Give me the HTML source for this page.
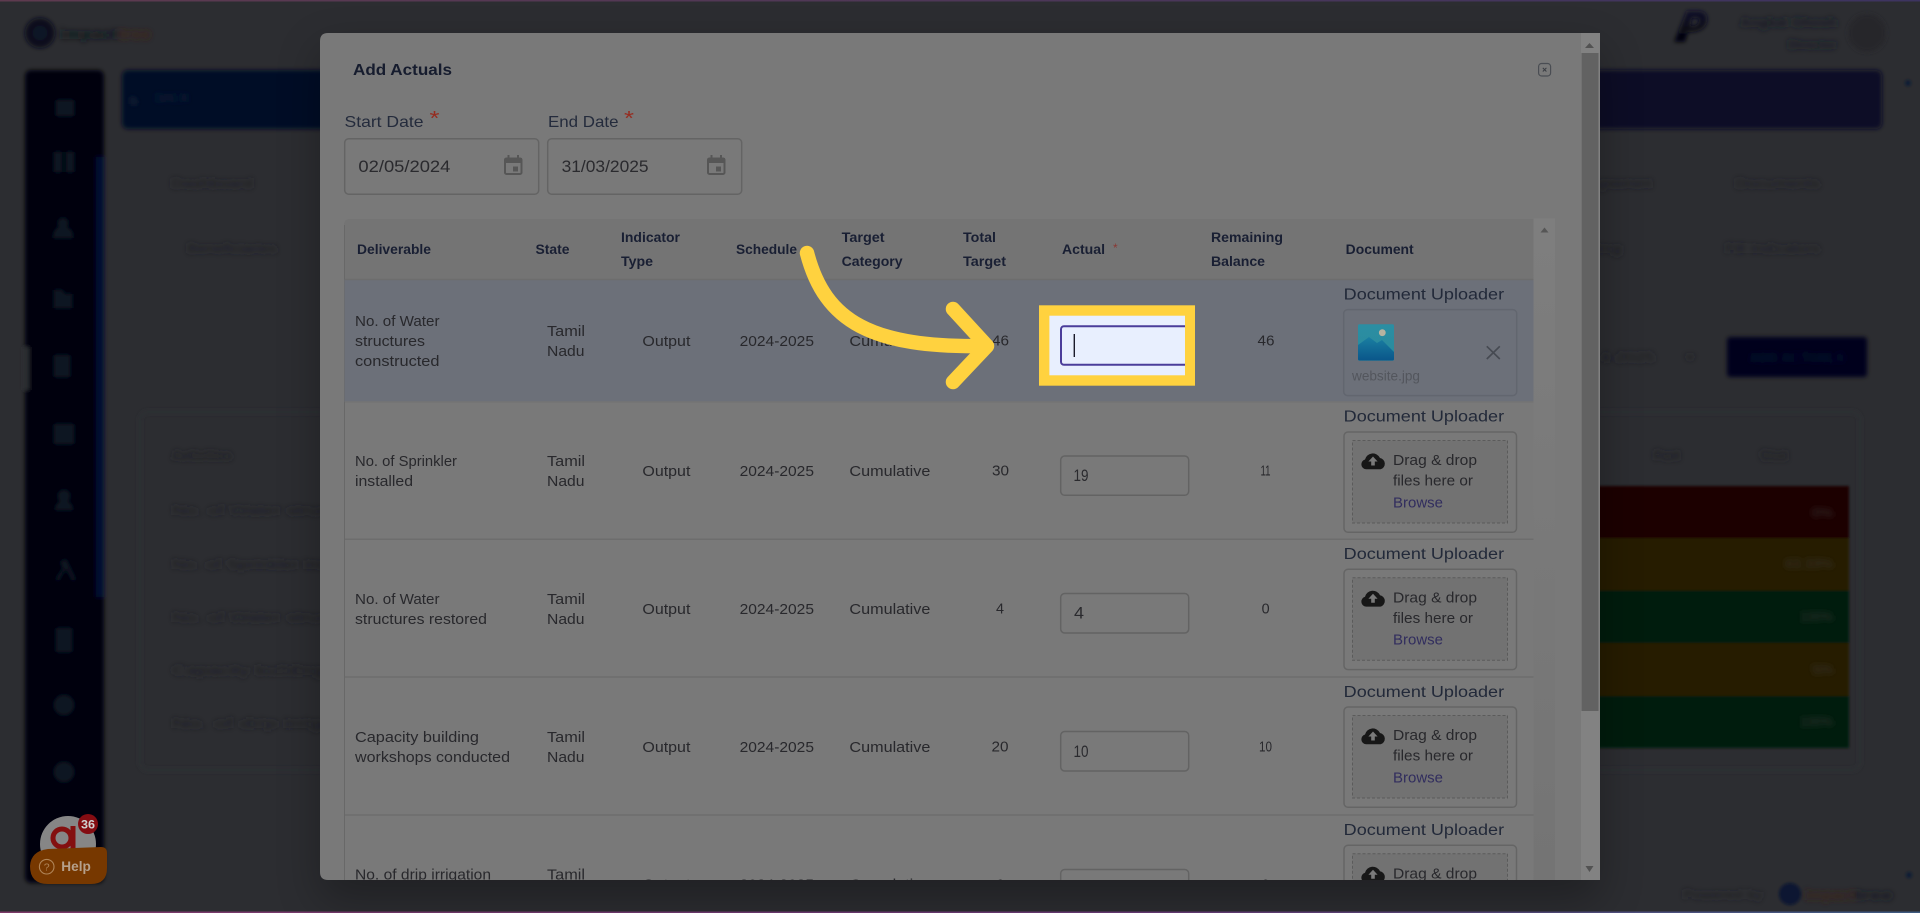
<!DOCTYPE html>
<html><head><meta charset="utf-8"><title>Add Actuals</title>
<style>
html,body{margin:0;padding:0;width:1920px;height:913px;overflow:hidden;background:#2c2d31}
svg{display:block;font-family:"Liberation Sans",sans-serif}
.c{font-size:14.5px;fill:#28282c}
.h{font-size:13.5px;font-weight:700;fill:#191f33}
.u{font-size:15.5px;fill:#222939}
.d{font-size:14.5px;fill:#28282c}
.b{font-size:14.5px;fill:#312d5e}
.l{font-size:16px;fill:#242b3c}
.v{font-size:16.5px;fill:#2a2a2e}
.bg{font-size:14px;fill:#212226}
</style></head><body>
<svg width="1920" height="913" viewBox="0 0 1920 913" xmlns="http://www.w3.org/2000/svg">
<defs>
<filter id="b2" filterUnits="userSpaceOnUse" x="0" y="0" width="1920" height="913"><feGaussianBlur stdDeviation="2"/></filter>
<filter id="bt" filterUnits="userSpaceOnUse" x="0" y="0" width="1920" height="913"><feGaussianBlur stdDeviation="2.8"/></filter>
<filter id="b1" filterUnits="userSpaceOnUse" x="0" y="0" width="1920" height="913"><feGaussianBlur stdDeviation="1.2"/></filter>
<filter id="b3" filterUnits="userSpaceOnUse" x="0" y="0" width="1920" height="913"><feGaussianBlur stdDeviation="22"/></filter>
<linearGradient id="ban" x1="0" x2="1" y1="0" y2="0"><stop offset="0" stop-color="#020f26"/><stop offset="1" stop-color="#090926"/></linearGradient>
<linearGradient id="pp" x1="0" x2="0" y1="0" y2="1"><stop offset="0" stop-color="#12112a"/><stop offset="1" stop-color="#02030a"/></linearGradient>
<linearGradient id="topl" x1="0" x2="1" y1="0" y2="0"><stop offset="0" stop-color="#5e3a4f"/><stop offset="1" stop-color="#3d3460"/></linearGradient>
<linearGradient id="botl" x1="0" x2="1" y1="0" y2="0"><stop offset="0" stop-color="#7c3a68"/><stop offset=".6" stop-color="#6a3c78"/><stop offset="1" stop-color="#3e5a80"/></linearGradient>
<linearGradient id="img" x1="0" x2="0" y1="0" y2="1"><stop offset="0" stop-color="#2b8ea3"/><stop offset="1" stop-color="#2a8a9c"/></linearGradient>
<linearGradient id="mt" x1="0" x2="0" y1="0" y2="1"><stop offset="0" stop-color="#1a7fa2"/><stop offset="1" stop-color="#0a568a"/></linearGradient>
<linearGradient id="trk" x1="0" x2="0" y1="0" y2="1"><stop offset="0" stop-color="#7e7e7e"/><stop offset="1" stop-color="#747474"/></linearGradient>
<clipPath id="mc"><path d="M328 33H1600V880H328Q320 880 320 872V41Q320 33 328 33Z"/></clipPath>
<clipPath id="ic"><rect x="1049" y="315" width="136" height="61"/></clipPath>
<g id="dz">
<rect x="1344" y="432" width="172.5" height="100.3" rx="4" fill="none" stroke="#656565" stroke-width="1.5"/>
<rect x="1352.5" y="440.5" width="155" height="82.5" fill="#727272" stroke="#5b5b5b" stroke-width="1" stroke-dasharray="3 2"/>
<path d="M1366 469.3a5 5 0 0 1-1-9.8a8 8 0 0 1 15-1.5a5.8 5.8 0 0 1 .6 11.3Z" fill="#171717"/>
<path d="M1373 456.5l4.6 5h-2.800v4h-3.600v-4h-2.800Z" fill="#7a7a7a"/>
</g>
<g id="cal" fill="none" stroke="#565656">
<rect x="505" y="158.5" width="16.5" height="15.5" rx="1.5" stroke-width="2"/>
<rect x="505" y="158.5" width="16.5" height="4" fill="#565656" stroke-width="1"/>
<path d="M508.5 155v4M518 155v4" stroke-width="2"/>
<rect x="513" y="166.5" width="5" height="5" fill="#565656" stroke="none"/>
</g>
</defs>

<rect width="1920" height="913" fill="#2c2d31"/>

<!-- blurred page behind overlay -->
<g filter="url(#b2)">
<circle cx="40" cy="33" r="15" fill="#08111f"/>
<circle cx="40" cy="33" r="7" fill="#0f1726"/>
<rect x="25" y="70" width="79" height="813" rx="6" fill="#00040e"/>
<rect x="96" y="157" width="8" height="440" fill="#000e30"/>
<rect x="24" y="347" width="5" height="43" fill="#2c2d31"/>
<g fill="#0f1522">
<rect x="56" y="100" width="18" height="16" rx="2"/>
<rect x="54" y="152" width="8" height="20" rx="1"/><rect x="66" y="152" width="8" height="20" rx="1"/>
<path d="M53 238q1-10 7-11a5 5 0 1 1 6 0q7 2 7 11Z"/>
<path d="M54 290h8l3 4h7v14h-18Z"/>
<rect x="54" y="355" width="16" height="22" rx="2"/>
<rect x="54" y="424" width="20" height="20" rx="2"/>
<circle cx="64" cy="496" r="6"/><path d="M55 510q1-9 9-9t9 9Z"/>
<path d="M55 580l8-12-3-6 6-3 10 21h-4l-6-12-7 12Z"/>
<rect x="56" y="628" width="16" height="24" rx="2"/>
<circle cx="64" cy="705" r="10"/>
<circle cx="64" cy="772" r="10"/>
</g>
<rect x="122" y="70" width="1760" height="59" rx="6" fill="url(#ban)"/>
<rect x="1727" y="337" width="140" height="40" rx="3" fill="#04051f"/>
<circle cx="1867" cy="33" r="19" fill="#27272a"/>
<path fill-rule="evenodd" d="M1687 11h12q9 1 8 10t-14 11h-5l-3 10h-11ZM1692 18h5q3 1 2 4t-5 4h-4Z" fill="url(#pp)"/>
<rect x="140" y="412" width="1720" height="358" rx="8" fill="none" stroke="#2f3035" stroke-width="2"/>
</g>
<g filter="url(#bt)">
<text x="60" y="39" textLength="58" lengthAdjust="spacingAndGlyphs" font-size="15" font-weight="700" fill="#10131c">impact</text>
<text x="119" y="39" textLength="32" lengthAdjust="spacingAndGlyphs" font-size="15" font-weight="700" fill="#3e2418">tree</text>
<text x="155" y="102" textLength="35" lengthAdjust="spacingAndGlyphs" font-size="12" fill="#162038">BACK</text>
<path d="M131 96l6 5v3h-6Z" fill="#1e2638"/>
<text class="bg" x="171" y="188" textLength="82" lengthAdjust="spacingAndGlyphs">Dashboard</text>
<text class="bg" x="187" y="253" textLength="90" lengthAdjust="spacingAndGlyphs">Beneficiaries</text>
<text class="bg" x="1590" y="188" textLength="62" lengthAdjust="spacingAndGlyphs">Agreement</text>
<text class="bg" x="1735" y="188" textLength="85" lengthAdjust="spacingAndGlyphs">Documents</text>
<text class="bg" x="1590" y="253" textLength="32" lengthAdjust="spacingAndGlyphs">ting</text>
<text class="bg" x="1725" y="253" textLength="95" lengthAdjust="spacingAndGlyphs">Fill Indicators</text>
<text class="bg" x="1600" y="362" textLength="55" lengthAdjust="spacingAndGlyphs">4-2025</text>
<path d="M1686 355l4 4 4-4" stroke="#212226" stroke-width="2" fill="none"/>
<text x="1749" y="362" textLength="96" lengthAdjust="spacingAndGlyphs" font-size="13" font-weight="700" fill="#10132e">ADD ACTUALS</text>
<text x="1740" y="27" textLength="97" lengthAdjust="spacingAndGlyphs" font-size="14" font-weight="700" fill="#171a25">Angkal Ghosh</text>
<text x="1788" y="49" textLength="49" lengthAdjust="spacingAndGlyphs" font-size="13" font-weight="700" fill="#171a25">Director</text>
<text class="bg" x="172" y="460" textLength="60" lengthAdjust="spacingAndGlyphs" font-weight="700">Activities</text>
<text class="bg" x="172" y="515" textLength="200" lengthAdjust="spacingAndGlyphs">No. of Water structures</text>
<text class="bg" x="172" y="569" textLength="200" lengthAdjust="spacingAndGlyphs">No. of Sprinkler installed</text>
<text class="bg" x="172" y="622" textLength="200" lengthAdjust="spacingAndGlyphs">No. of Water structures</text>
<text class="bg" x="172" y="675" textLength="200" lengthAdjust="spacingAndGlyphs">Capacity building work</text>
<text class="bg" x="172" y="728" textLength="200" lengthAdjust="spacingAndGlyphs">No. of drip irrigation</text>
<text class="bg" x="1654" y="460" textLength="26" lengthAdjust="spacingAndGlyphs" font-weight="700">Fact</text>
<text class="bg" x="1760" y="460" textLength="28" lengthAdjust="spacingAndGlyphs" font-weight="700">Stat</text>
</g>
<g filter="url(#b1)">
<rect x="1590" y="486" width="259" height="52" fill="#1f0204"/>
<rect x="1590" y="538" width="259" height="52.5" fill="#281d06"/>
<rect x="1590" y="590.5" width="259" height="52.5" fill="#031b0c"/>
<rect x="1590" y="643" width="259" height="53" fill="#281d06"/>
<rect x="1590" y="696" width="259" height="52" fill="#031b0c"/>
<circle cx="1908" cy="83" r="3" fill="#0b1a36"/>
<circle cx="1909" cy="875" r="3" fill="#0b1a36"/>
<circle cx="1790" cy="894" r="11" fill="#081530"/>
</g>
<g filter="url(#bt)">
<g font-size="13" fill="#383634">
<text x="1812" y="517" textLength="21" lengthAdjust="spacingAndGlyphs">0%</text>
<text x="1785" y="568" textLength="48" lengthAdjust="spacingAndGlyphs">63.33%</text>
<text x="1800" y="621" textLength="33" lengthAdjust="spacingAndGlyphs">100%</text>
<text x="1812" y="674" textLength="21" lengthAdjust="spacingAndGlyphs">50%</text>
<text x="1800" y="726" textLength="33" lengthAdjust="spacingAndGlyphs">100%</text>
</g>
<text x="1683" y="899" textLength="80" lengthAdjust="spacingAndGlyphs" font-size="13" fill="#212226">Powered by</text>
<text x="1805" y="900" textLength="50" lengthAdjust="spacingAndGlyphs" font-size="15" font-weight="700" fill="#3a2218">impact</text>
<text x="1855" y="900" textLength="38" lengthAdjust="spacingAndGlyphs" font-size="15" font-weight="700" fill="#181a22">tree</text>
</g>

<rect x="0" y="0" width="1920" height="1.5" fill="url(#topl)"/>
<rect x="0" y="911.5" width="1920" height="1.5" fill="url(#botl)"/>

<!-- Help widget -->
<circle cx="68" cy="844" r="28" fill="#868686"/>
<circle cx="62" cy="838" r="9" fill="none" stroke="#841010" stroke-width="5"/>
<path d="M73 826v24" stroke="#841010" stroke-width="5"/>
<circle cx="88" cy="824" r="10" fill="#840c12"/>
<text x="81" y="828.5" textLength="14" lengthAdjust="spacingAndGlyphs" font-size="12" font-weight="700" fill="#d0d0d0">36</text>
<path d="M30 866Q31 851 48 849L101 847Q107 847 107 853V868Q107 884 91 884H48Q30 884 30 866Z" fill="#773800"/>
<circle cx="46.7" cy="866.7" r="7.3" fill="none" stroke="#b08558" stroke-width="1.1"/>
<text x="43.7" y="870.5" font-size="10.5" fill="#b08558">?</text>
<text x="61.3" y="871" textLength="29.5" lengthAdjust="spacingAndGlyphs" font-size="14" font-weight="700" fill="#b5a08b">Help</text>

<!-- modal shadow -->
<rect x="320" y="50" width="1280" height="850" fill="#000" opacity=".28" filter="url(#b3)"/>

<!-- modal -->
<g clip-path="url(#mc)">
<rect x="320" y="33" width="1280" height="847" fill="#797979"/>

<!-- outer scrollbar -->
<rect x="1581" y="33" width="19" height="847" fill="#828282"/>
<rect x="1581.5" y="53" width="17" height="658" fill="#626262"/>
<path d="M1585 48l4.5-5 4.5 5Z" fill="#525252"/>
<path d="M1585.5 866h8l-4 6Z" fill="#525252"/>

<text x="353" y="75" textLength="99" lengthAdjust="spacingAndGlyphs" font-size="16" font-weight="700" fill="#161c2e">Add Actuals</text>
<rect x="1538.6" y="63.5" width="12" height="12.5" rx="3" fill="none" stroke="#4a4d53" stroke-width="1.2"/>
<path d="M1542.8 67.9l3.6 3.6M1546.4 67.9l-3.6 3.6" stroke="#3a3d43" stroke-width="1"/>

<text class="l" x="344.5" y="127" textLength="79" lengthAdjust="spacingAndGlyphs">Start Date</text>
<text x="429.5" y="125" textLength="10" lengthAdjust="spacingAndGlyphs" font-size="20" fill="#962c20">*</text>
<text class="l" x="548" y="127" textLength="70.5" lengthAdjust="spacingAndGlyphs">End Date</text>
<text x="624" y="125" textLength="10" lengthAdjust="spacingAndGlyphs" font-size="20" fill="#962c20">*</text>

<rect x="344.7" y="138.7" width="194" height="55.5" rx="4" fill="none" stroke="#646464" stroke-width="1.5"/>
<rect x="547.7" y="138.7" width="194" height="55.5" rx="4" fill="none" stroke="#646464" stroke-width="1.5"/>
<text class="v" x="358.4" y="172" textLength="92" lengthAdjust="spacingAndGlyphs">02/05/2024</text>
<text class="v" x="561.6" y="172" textLength="87" lengthAdjust="spacingAndGlyphs">31/03/2025</text>
<use href="#cal"/>
<use href="#cal" x="203"/>

<!-- table -->
<path d="M344 225Q344 219 350 219H1533.5V279.5H344Z" fill="#747474"/>
<rect x="1533.5" y="218.5" width="21.5" height="662" fill="url(#trk)"/>
<path d="M1540.5 232.5l4-5 4 5Z" fill="#565656"/>
<path d="M344.5 225V880" stroke="#686868" stroke-width="1"/>
<rect x="344.5" y="279.5" width="1189" height="122.5" fill="#6c7079"/>
<g stroke="#6d6d6d" stroke-width="1.5">
<path d="M345 279.5H1533.5"/>
<path d="M345 402H1533.5" stroke="#747474"/>
<path d="M345 539.3H1533.5"/>
<path d="M345 677H1533.5"/>
<path d="M345 815H1533.5"/>
</g>

<text class="h" x="357" y="254" textLength="74" lengthAdjust="spacingAndGlyphs">Deliverable</text>
<text class="h" x="535.5" y="254" textLength="34" lengthAdjust="spacingAndGlyphs">State</text>
<text class="h" x="621" y="242" textLength="59" lengthAdjust="spacingAndGlyphs">Indicator</text>
<text class="h" x="621" y="266" textLength="32" lengthAdjust="spacingAndGlyphs">Type</text>
<text class="h" x="736" y="254" textLength="61" lengthAdjust="spacingAndGlyphs">Schedule</text>
<text class="h" x="841.6" y="242" textLength="43" lengthAdjust="spacingAndGlyphs">Target</text>
<text class="h" x="841.6" y="266" textLength="61" lengthAdjust="spacingAndGlyphs">Category</text>
<text class="h" x="963" y="242" textLength="33" lengthAdjust="spacingAndGlyphs">Total</text>
<text class="h" x="963" y="266" textLength="43" lengthAdjust="spacingAndGlyphs">Target</text>
<text class="h" x="1062" y="254" textLength="43" lengthAdjust="spacingAndGlyphs">Actual</text>
<text x="1113" y="252" font-size="12" fill="#8a3834">*</text>
<text class="h" x="1211" y="242" textLength="72" lengthAdjust="spacingAndGlyphs">Remaining</text>
<text class="h" x="1211" y="266" textLength="54" lengthAdjust="spacingAndGlyphs">Balance</text>
<text class="h" x="1345.7" y="254" textLength="68" lengthAdjust="spacingAndGlyphs">Document</text>

<!-- row 1 -->
<text class="c" x="355" y="326" textLength="84.5" lengthAdjust="spacingAndGlyphs">No. of Water</text>
<text class="c" x="355" y="346" textLength="70" lengthAdjust="spacingAndGlyphs">structures</text>
<text class="c" x="355" y="366" textLength="84.5" lengthAdjust="spacingAndGlyphs">constructed</text>
<text class="c" x="547" y="336" textLength="38" lengthAdjust="spacingAndGlyphs">Tamil</text>
<text class="c" x="547" y="356" textLength="37.5" lengthAdjust="spacingAndGlyphs">Nadu</text>
<text class="c" x="642.4" y="346" textLength="48" lengthAdjust="spacingAndGlyphs">Output</text>
<text class="c" x="739.6" y="346" textLength="74.4" lengthAdjust="spacingAndGlyphs">2024-2025</text>
<text class="c" x="849.4" y="346" textLength="81" lengthAdjust="spacingAndGlyphs">Cumulative</text>
<text class="c" x="992" y="345.5" textLength="17" lengthAdjust="spacingAndGlyphs">46</text>
<text class="c" x="1257.5" y="345.5" textLength="17" lengthAdjust="spacingAndGlyphs">46</text>
<text class="u" x="1343.7" y="299.5" textLength="160.4" lengthAdjust="spacingAndGlyphs">Document Uploader</text>
<rect x="1343.7" y="309.6" width="173" height="86" rx="4" fill="#6c7079" stroke="#62666f" stroke-width="1.5"/>
<rect x="1358" y="324.3" width="36" height="36.5" rx="1.5" fill="url(#img)"/>
<path d="M1358 345l11-8 8 6 5-3 12 12v7a1.5 1.5 0 0 1-1.5 1.5h-33a1.5 1.5 0 0 1-1.5-1.5Z" fill="url(#mt)"/>
<circle cx="1382.3" cy="332.7" r="3.4" fill="#b8b3a0"/>
<text x="1352" y="380.7" textLength="68" lengthAdjust="spacingAndGlyphs" font-size="13.5" fill="#53565d">website.jpg</text>
<path d="M1486.8 346.3L1499.8 359M1499.8 346.3L1486.8 359" stroke="#464a52" stroke-width="1.7" fill="none"/>

<!-- row 2 -->
<text class="c" x="355" y="466" textLength="102" lengthAdjust="spacingAndGlyphs">No. of Sprinkler</text>
<text class="c" x="355" y="486" textLength="58" lengthAdjust="spacingAndGlyphs">installed</text>
<text class="c" x="547" y="466" textLength="38" lengthAdjust="spacingAndGlyphs">Tamil</text>
<text class="c" x="547" y="486" textLength="37.5" lengthAdjust="spacingAndGlyphs">Nadu</text>
<text class="c" x="642.4" y="476" textLength="48" lengthAdjust="spacingAndGlyphs">Output</text>
<text class="c" x="739.6" y="476" textLength="74.4" lengthAdjust="spacingAndGlyphs">2024-2025</text>
<text class="c" x="849.4" y="476" textLength="81" lengthAdjust="spacingAndGlyphs">Cumulative</text>
<text class="c" x="992" y="475.5" textLength="17" lengthAdjust="spacingAndGlyphs">30</text>
<text class="c" x="1260.5" y="475.5" textLength="10" lengthAdjust="spacingAndGlyphs">11</text>
<rect x="1060.7" y="456" width="128" height="39.3" rx="4" fill="none" stroke="#636363" stroke-width="1.5"/>
<text class="v" x="1073.5" y="481" textLength="15" lengthAdjust="spacingAndGlyphs">19</text>
<text class="u" x="1343.7" y="421.5" textLength="160.4" lengthAdjust="spacingAndGlyphs">Document Uploader</text>
<use href="#dz"/>
<text class="d" x="1393" y="465" textLength="84" lengthAdjust="spacingAndGlyphs">Drag &amp; drop</text>
<text class="d" x="1393" y="485.7" textLength="80" lengthAdjust="spacingAndGlyphs">files here or</text>
<text class="b" x="1393" y="507.3" textLength="50" lengthAdjust="spacingAndGlyphs">Browse</text>

<!-- row 3 -->
<text class="c" x="355" y="604" textLength="84.5" lengthAdjust="spacingAndGlyphs">No. of Water</text>
<text class="c" x="355" y="624" textLength="132" lengthAdjust="spacingAndGlyphs">structures restored</text>
<text class="c" x="547" y="604" textLength="38" lengthAdjust="spacingAndGlyphs">Tamil</text>
<text class="c" x="547" y="624" textLength="37.5" lengthAdjust="spacingAndGlyphs">Nadu</text>
<text class="c" x="642.4" y="614" textLength="48" lengthAdjust="spacingAndGlyphs">Output</text>
<text class="c" x="739.6" y="614" textLength="74.4" lengthAdjust="spacingAndGlyphs">2024-2025</text>
<text class="c" x="849.4" y="614" textLength="81" lengthAdjust="spacingAndGlyphs">Cumulative</text>
<text class="c" x="996" y="613.7" textLength="8" lengthAdjust="spacingAndGlyphs">4</text>
<text class="c" x="1261.6" y="613.7" textLength="8" lengthAdjust="spacingAndGlyphs">0</text>
<rect x="1060.7" y="593.5" width="128" height="39.5" rx="4" fill="none" stroke="#636363" stroke-width="1.5"/>
<text class="v" x="1074" y="618.5" textLength="10" lengthAdjust="spacingAndGlyphs">4</text>
<text class="u" x="1343.7" y="559" textLength="160.4" lengthAdjust="spacingAndGlyphs">Document Uploader</text>
<use href="#dz" y="137.3"/>
<text class="d" x="1393" y="602.3" textLength="84" lengthAdjust="spacingAndGlyphs">Drag &amp; drop</text>
<text class="d" x="1393" y="623" textLength="80" lengthAdjust="spacingAndGlyphs">files here or</text>
<text class="b" x="1393" y="644.6" textLength="50" lengthAdjust="spacingAndGlyphs">Browse</text>

<!-- row 4 -->
<text class="c" x="355" y="742" textLength="124" lengthAdjust="spacingAndGlyphs">Capacity building</text>
<text class="c" x="355" y="762" textLength="155" lengthAdjust="spacingAndGlyphs">workshops conducted</text>
<text class="c" x="547" y="742" textLength="38" lengthAdjust="spacingAndGlyphs">Tamil</text>
<text class="c" x="547" y="762" textLength="37.5" lengthAdjust="spacingAndGlyphs">Nadu</text>
<text class="c" x="642.4" y="752" textLength="48" lengthAdjust="spacingAndGlyphs">Output</text>
<text class="c" x="739.6" y="752" textLength="74.4" lengthAdjust="spacingAndGlyphs">2024-2025</text>
<text class="c" x="849.4" y="752" textLength="81" lengthAdjust="spacingAndGlyphs">Cumulative</text>
<text class="c" x="991.5" y="751.7" textLength="17" lengthAdjust="spacingAndGlyphs">20</text>
<text class="c" x="1259" y="751.7" textLength="13" lengthAdjust="spacingAndGlyphs">10</text>
<rect x="1060.7" y="731.5" width="128" height="39.5" rx="4" fill="none" stroke="#636363" stroke-width="1.5"/>
<text class="v" x="1073.5" y="757" textLength="15" lengthAdjust="spacingAndGlyphs">10</text>
<text class="u" x="1343.7" y="697" textLength="160.4" lengthAdjust="spacingAndGlyphs">Document Uploader</text>
<use href="#dz" y="275"/>
<text class="d" x="1393" y="740" textLength="84" lengthAdjust="spacingAndGlyphs">Drag &amp; drop</text>
<text class="d" x="1393" y="760.7" textLength="80" lengthAdjust="spacingAndGlyphs">files here or</text>
<text class="b" x="1393" y="782.3" textLength="50" lengthAdjust="spacingAndGlyphs">Browse</text>

<!-- row 5 -->
<text class="c" x="355" y="879.7" textLength="136" lengthAdjust="spacingAndGlyphs">No. of drip irrigation</text>
<text class="c" x="547" y="879.7" textLength="38" lengthAdjust="spacingAndGlyphs">Tamil</text>
<text class="c" x="642.4" y="889.7" textLength="48" lengthAdjust="spacingAndGlyphs">Output</text>
<text class="c" x="739.6" y="889.7" textLength="74.4" lengthAdjust="spacingAndGlyphs">2024-2025</text>
<text class="c" x="849.4" y="889.7" textLength="81" lengthAdjust="spacingAndGlyphs">Cumulative</text>
<text class="c" x="996" y="889.7" textLength="8" lengthAdjust="spacingAndGlyphs">6</text>
<text class="c" x="1261.6" y="889.7" textLength="8" lengthAdjust="spacingAndGlyphs">0</text>
<rect x="1060.7" y="869.5" width="128" height="39.5" rx="4" fill="none" stroke="#636363" stroke-width="1.5"/>
<text class="u" x="1343.7" y="835" textLength="160.4" lengthAdjust="spacingAndGlyphs">Document Uploader</text>
<use href="#dz" y="413.3"/>
<text class="d" x="1393" y="878.3" textLength="84" lengthAdjust="spacingAndGlyphs">Drag &amp; drop</text>
</g>

<!-- highlight box -->
<rect x="1039" y="305.3" width="156" height="80.4" fill="#ffd23f"/>
<rect x="1049.4" y="315.7" width="135.6" height="59.6" fill="#e8effe"/>
<g clip-path="url(#ic)">
<rect x="1061" y="326.2" width="140" height="38.6" rx="3" fill="#e8effe" stroke="#4a3d9a" stroke-width="2"/>
</g>
<rect x="1073.6" y="334" width="1.4" height="23" fill="#1a1a2a"/>

<!-- arrow -->
<g fill="none" stroke="#ffd23f" stroke-linecap="round" stroke-linejoin="round" stroke-width="14.5">
<path d="M807 253C825 322 872 348 985 346"/>
<path d="M953 309L987 346L953 382"/>
</g>
</svg>
</body></html>
